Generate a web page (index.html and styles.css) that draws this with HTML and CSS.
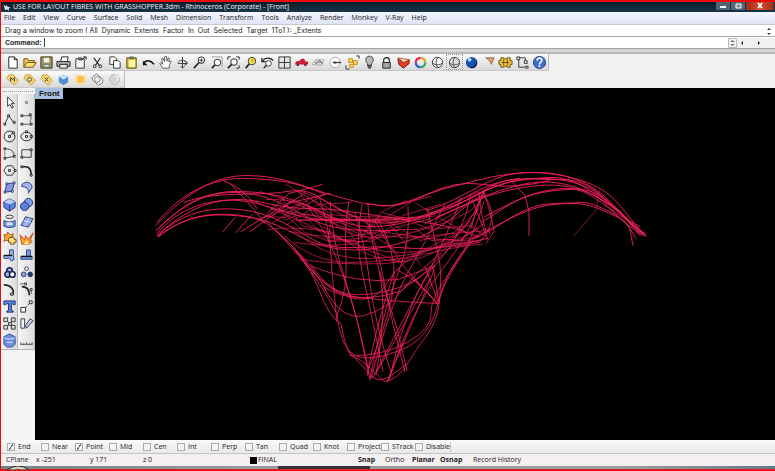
FILE: index.html
```html
<!DOCTYPE html>
<html lang="en">
<head>
<meta charset="utf-8">
<title>Rhinoceros (Corporate) - [Front]</title>
<link rel="stylesheet" href="styles.css">
</head>
<body>
<header class="title-bar">
  <svg class="app-icon" viewBox="0 0 10 10"><path d="M1 1l2 3 2-2 0 2 4 1-2 1 0 3-2-2-2 1-1-3z" fill="#dde3e8"/></svg>
  <h1>USE FOR LAYOUT FIBRES WITH GRASSHOPPER.3dm - Rhinoceros (Corporate) - [Front]</h1>
  <div class="window-buttons">
    <button aria-label="Minimize"><svg viewBox="0 0 10 8"><path d="M2 4h6v2H2z" fill="#fff"/></svg></button>
    <button aria-label="Restore"><svg viewBox="0 0 10 8"><path d="M3 2h5v4H3z" fill="#789" stroke="#fff"/></svg></button>
    <button class="close" aria-label="Close"><svg viewBox="0 0 10 8"><path d="M3 1l4 5M7 1L3 6" stroke="#fff" stroke-width="1.6"/></svg></button>
  </div>
</header>
<nav class="menu">
  <a href="#">File</a><a href="#">Edit</a><a href="#">View</a><a href="#">Curve</a><a href="#">Surface</a><a href="#">Solid</a><a href="#">Mesh</a><a href="#">Dimension</a><a href="#">Transform</a><a href="#">Tools</a><a href="#">Analyze</a><a href="#">Render</a><a href="#">Monkey</a><a href="#">V-Ray</a><a href="#">Help</a>
</nav>
<section class="history"><p>Drag a window to zoom ( All&nbsp; Dynamic&nbsp; Extents&nbsp; Factor&nbsp; In&nbsp; Out&nbsp; Selected&nbsp; Target&nbsp; 1To1 ): _Extents</p>
  <svg class="spin" viewBox="0 0 6 10"><path d="M1 4l2-2 2 2zM1 7l2 2 2-2z" fill="#333"/></svg>
</section>
<section class="command">
  <label for="cmd">Command:</label><input id="cmd" type="text">
  <button aria-label="History"><svg viewBox="0 0 9 10"><path d="M.5.5h8v9h-8z" fill="#f4f4f4" stroke="#bbb"/><path d="M2 4l2.500-2L7 4zM2 6l2.500 2L7 6z" fill="#777"/></svg></button>
  <div class="scroller"><svg viewBox="0 0 28 10"><path d="M6 3v4L4 5zM21 3v4l2-2z" fill="#222"/></svg></div>
</section>
<div class="divider"></div>
<div class="tool-row">
<div class="toolbar main-tools">
<button aria-label="New"><svg viewBox="0 0 16 16"><path d="M4 2h6l3 3v9H4zM10 2v3h3" fill="#fff" stroke="#222"/></svg></button>
<button aria-label="Open"><svg viewBox="0 0 16 16"><path d="M2 13V4h4l1 2h6v2" fill="#f5c84c" stroke="#6b5012"/><path d="M2 13l3-5h10l-3 5z" fill="#ffdf78" stroke="#6b5012"/></svg></button>
<button aria-label="Save"><svg viewBox="0 0 16 16"><path d="M2 2h12v12H2z" fill="#9c9559" stroke="#3a3820"/><path d="M5 3h6v5H5z" fill="#eee"/><path d="M5 10h6v3H5z" fill="#d9d9d0" stroke="#444" stroke-width=".6"/></svg></button>
<button aria-label="Print"><svg viewBox="0 0 16 16"><path d="M5 7l1-5h7l-1 5" fill="#fff" stroke="#222"/><path d="M1 7h14v5H1z" fill="#aaa" stroke="#222"/><path d="M4 10h8v4H4z" fill="#eee" stroke="#222"/></svg></button>
<button aria-label="Properties"><svg viewBox="0 0 16 16"><path d="M3 4h9v10H3z" fill="#f5f5f2" stroke="#333"/><path d="M6 3h3v2H6zM9 6l4-4M11 2h3v3" fill="#ccc" stroke="#222"/></svg></button>
<button aria-label="Cut"><svg viewBox="0 0 16 16"><path d="M4 3l6 8M11 3l-5 8" stroke="#222" stroke-width="1.200"/><g fill="none" stroke="#222"><circle cx="5" cy="12" r="1.500"/><circle cx="11" cy="12" r="1.500"/></g></svg></button>
<button aria-label="Copy"><svg viewBox="0 0 16 16"><path d="M3 2h5l2 2v6H3z" fill="#fff" stroke="#333"/><path d="M7 6h5l2 2v6H7z" fill="#fff" stroke="#333"/></svg></button>
<button aria-label="Paste"><svg viewBox="0 0 16 16"><path d="M3 3h10v11H3z" fill="#d7be34" stroke="#554a10"/><path d="M5 5h7v8H5z" fill="#fff799"/><path d="M6 2h4v2H6z" fill="#999" stroke="#333" stroke-width=".6"/></svg></button>
<button aria-label="Undo"><svg viewBox="0 0 16 16"><path d="M3 9c2-4 7-4 11 1" fill="none" stroke="#111" stroke-width="1.700"/><path d="M2 6v5h5z" fill="#111"/></svg></button>
<button aria-label="Pan"><svg viewBox="0 0 16 16"><path d="M5 14L2 9l1-1 2 2-1-6 1-1 2 4V2l2-.5.5 5L11 3l1 .5-.5 4L13 6l1 1-2 4v3z" fill="#fff" stroke="#333" stroke-width=".8"/></svg></button>
<button aria-label="Rotate view"><svg viewBox="0 0 16 16"><path d="M8 2v12M3 9h10M10 6l3 3-3 2" fill="none" stroke="#333"/><path d="M3 8c1-3 8-3 10 0M6 12l2 2 2-2" fill="none" stroke="#444"/></svg></button>
<button aria-label="Zoom dynamic"><svg viewBox="0 0 16 16"><circle cx="10" cy="5.500" r="3.500" fill="#eef" stroke="#222"/><path d="M7.500 8L2 14" stroke="#222" stroke-width="1.800"/><path d="M8 5.500h4M10 4v4" stroke="#333"/></svg></button>
<button aria-label="Zoom window"><svg viewBox="0 0 16 16"><path d="M3 2h11v10" fill="none" stroke="#555" stroke-dasharray="1 1"/><circle cx="9" cy="8" r="3.500" fill="#fff" stroke="#222"/><path d="M6.500 10.500L3 14" stroke="#222" stroke-width="1.700"/></svg></button>
<button aria-label="Zoom extents"><svg viewBox="0 0 16 16"><path d="M2 5V2h3M11 2h3v3M14 11v3h-3" fill="none" stroke="#222"/><circle cx="8.500" cy="7.500" r="3.500" fill="#fff" stroke="#222"/><path d="M6 10l-4 4" stroke="#222" stroke-width="1.700"/></svg></button>
<button aria-label="Zoom selected"><svg viewBox="0 0 16 16"><circle cx="9.500" cy="6.500" r="4" fill="#f4e65a" stroke="#333"/><path d="M6.500 9.500L3 14" stroke="#222" stroke-width="1.800"/><circle cx="10" cy="6" r="1.500" fill="#c9ac28"/></svg></button>
<button aria-label="Undo view"><svg viewBox="0 0 16 16"><path d="M2 3v4h4M3 6c3-4 9-3 11 0" fill="none" stroke="#222" stroke-width="1.300"/><circle cx="9" cy="9" r="3" fill="#fff" stroke="#333"/><path d="M7 11l-3 3" stroke="#222" stroke-width="1.500"/></svg></button>
<button aria-label="Four views"><svg viewBox="0 0 16 16"><path d="M2 2h12v12H2zM8 2v12M2 8h12" fill="#e4e4e0" stroke="#333"/></svg></button>
<button aria-label="Car view"><svg viewBox="0 0 16 16"><path d="M1 10l1-3 4-1 2-2h3l1 3h3v3z" fill="#c51f36"/><circle cx="4" cy="10.500" r="1.500" fill="#733"/><circle cx="12" cy="10.500" r="1.500" fill="#733"/></svg></button>
<button aria-label="Set CPlane"><svg viewBox="0 0 16 16"><path d="M1 10l4-5h9l-3 6zM3 8h10M6 5l-2 6M10 5l-2 6" fill="none" stroke="#aaa" stroke-width=".8"/><path d="M5 10l3-4 3 1 1 3" fill="none" stroke="#555"/></svg></button>
<button aria-label="Object snap"><svg viewBox="0 0 16 16"><circle cx="7.500" cy="8" r="5.500" fill="#fff" stroke="#aaa"/><path d="M5 8h9" stroke="#444" stroke-width="1.500"/><circle cx="7.500" cy="8" r="1.200" fill="#333"/></svg></button>
<button aria-label="Select points"><svg viewBox="0 0 16 16"><path d="M4 4h4v4H4zM9 6h4v4H9z" fill="#ffdc55" stroke="#c68a20"/><path d="M5 10h4v3H5z" fill="#ffdc55" stroke="#c68a20"/><path d="M12 1h3v3M1 11v4h4" fill="none" stroke="#333"/></svg></button>
<button aria-label="Lights"><svg viewBox="0 0 16 16"><path d="M6 11c0-3-2-3-2-6 0-5 8-5 8 0 0 3-2 3-2 6z" fill="#bbb" stroke="#444"/><path d="M6 11h4l-1 3H7z" fill="#777" stroke="#333"/></svg></button>
<button aria-label="Lock"><svg viewBox="0 0 16 16"><path d="M5 8V5c0-3 6-3 6 0v3" fill="none" stroke="#222" stroke-width="1.200"/><path d="M4 8h8v6H4z" fill="#a5a5a0" stroke="#222"/></svg></button>
<button aria-label="Layers"><svg viewBox="0 0 16 16"><path d="M2 4l6 4 6-3v4l-6 5-5-4z" fill="#e93d1f" stroke="#6b1720"/><path d="M2 3l7 1 5 1-6 3z" fill="#f7cfae" stroke="#a83a20" stroke-width=".7"/></svg></button>
<button aria-label="Colour"><svg viewBox="0 0 16 16"><g fill="none" stroke-width="2.500"><path d="M8 3a5 5 0 0 1 5 5" stroke="#f0a020"/><path d="M13 8a5 5 0 0 1-5 5" stroke="#35a965"/><path d="M8 13a5 5 0 0 1-5-5" stroke="#325eca"/><path d="M3 8a5 5 0 0 1 5-5" stroke="#e0284b"/></g></svg></button>
<button aria-label="Wireframe"><svg viewBox="0 0 16 16"><circle cx="8" cy="8" r="5.500" fill="#f9f9f9" stroke="#333"/><path d="M3 9c3 2 7 2 10 0M8 3c-2 3-2 7 0 10" fill="none" stroke="#444"/></svg></button>
<button class="pressed" aria-label="Ghosted"><svg viewBox="0 0 16 16"><circle cx="8" cy="8" r="5.500" fill="#ddd" stroke="#333"/><path d="M3 9c3 2 7 2 10 0M8 3c-2 3-2 7 0 10" fill="none" stroke="#555"/></svg></button>
<button aria-label="Render"><svg viewBox="0 0 16 16"><circle cx="8" cy="8" r="6" fill="#174fae"/><path d="M4 12c6 3 11-2 9-8 3 5 0 11-5 10z" fill="#071b4d"/><circle cx="6" cy="5" r="2" fill="#b8dcff"/></svg></button>
<button aria-label="Notes"><svg viewBox="0 0 16 16"><path d="M5 3h9l-3 7-2-4z" fill="#d9a77a" stroke="#805538" stroke-width=".8"/></svg></button>
<button aria-label="Options"><svg viewBox="0 0 16 16"><path d="M3 3h3v1h4V3h3v3h2v4h-2v3h-3v-1H6v1H3v-3H1V6h2z" fill="#eac642" stroke="#69530f"/><path d="M6 5v6M10 5v6M4 8h8" stroke="#69530f"/></svg></button>
<button aria-label="Dimensions"><svg viewBox="0 0 16 16"><path d="M2 2h3v3H2zM4 5v8h6M5 3h6v3M10 6h3v3h-3zM11 12h3v2h-3z" fill="none" stroke="#333"/></svg></button>
<button aria-label="Help"><svg viewBox="0 0 16 16"><circle cx="8" cy="8" r="6.500" fill="#3f6fca" stroke="#173b83"/><path d="M5.500 6c0-4 5.500-3 5 0-.3 2-2.500 1.500-2.500 4M8 11v2" fill="none" stroke="#fff" stroke-width="1.700"/></svg></button>
</div></div>
<div class="tool-row">
<div class="toolbar">
<button aria-label="Tag M"><svg viewBox="0 0 16 16"><path d="M2 7l2-4h5l5 6-4 5z" fill="#f2d36c" stroke="#c9a84a"/><path d="M6 10V6l2 2 2-2v4" fill="none" stroke="#433"/></svg></button>
<button aria-label="Tag O"><svg viewBox="0 0 16 16"><path d="M2 7l2-4h5l5 6-4 5z" fill="#f2d36c" stroke="#c9a84a"/><circle cx="8" cy="8" r="2" fill="#fff6aa" stroke="#433"/></svg></button>
<button aria-label="Tag R"><svg viewBox="0 0 16 16"><path d="M2 7l2-4h5l5 6-4 5z" fill="#f2d36c" stroke="#c9a84a"/><path d="M6 6l4 4M10 6l-4 4" stroke="#433"/></svg></button>
<button aria-label="Cube"><svg viewBox="0 0 16 16"><path d="M3 5l5-2 5 2v6l-5 3-5-3z" fill="#4f8fd2"/><path d="M3 5l5-2 5 2-5 3z" fill="#bfe3ff"/></svg></button>
<button aria-label="Sun"><svg viewBox="0 0 16 16"><path d="M8 2l2 2 3-1v3l2 2-2 2v3l-3-1-2 2-2-2H3v-3L1 8l2-2V3h3z" fill="#ffdf9a"/><circle cx="8" cy="8" r="4" fill="#ffc04c"/></svg></button>
<button aria-label="Link"><svg viewBox="0 0 16 16"><path d="M2 6l5-4 7 6-1 4-4 2-6-5z" fill="#eee" stroke="#777"/><circle cx="8" cy="8" r="3" fill="none" stroke="#888"/></svg></button>
<button aria-label="Disc"><svg viewBox="0 0 16 16"><circle cx="8" cy="8" r="5.500" fill="#d4d4d4" stroke="#bbb"/><path d="M8 4c4 0 5 3 2 5" fill="none" stroke="#eee" stroke-width="2"/></svg></button>
</div></div>
<main class="workspace">
<aside class="side">
<div class="grip"></div>
<div class="palette">
<button aria-label="Select"><svg viewBox="0 0 16 16"><path d="M6 2v10l2.500-2 2 4 1.500-1-2-4h3z" fill="#fff" stroke="#333"/></svg></button>
<button aria-label="Point"><svg viewBox="0 0 16 16"><circle cx="8" cy="8" r="1.200" fill="#fff" stroke="#444"/></svg></button>
<button aria-label="Polyline"><svg viewBox="0 0 16 16"><path d="M3 13l4-9 6 8" fill="none" stroke="#333"/><path d="M2 12h2v2H2zM6 3h2v2H6zM12 10h2v2h-2z" fill="#fff" stroke="#222"/></svg></button>
<button aria-label="Curve"><svg viewBox="0 0 16 16"><path d="M3 4h9c3 4-2 4 1 9H3" fill="none" stroke="#555"/><path d="M2 3h2v2H2zM11 2h2v2h-2zM2 12h2v2H2zM12 12h2v2h-2z" fill="#fff" stroke="#222"/></svg></button>
<button aria-label="Circle"><svg viewBox="0 0 16 16"><circle cx="8" cy="8" r="5.800" fill="none" stroke="#222"/><path d="M8 8l4-4" stroke="#444"/><path d="M7 7h2v2H7zM11 3h2v2h-2z" fill="#fff" stroke="#222"/></svg></button>
<button aria-label="Ellipse"><svg viewBox="0 0 16 16"><ellipse cx="8" cy="8" rx="6" ry="4.500" fill="none" stroke="#222"/><path d="M7 7h2v2H7zM7 2h2v2H7zM12 7h2v2h-2z" fill="#fff" stroke="#222"/></svg></button>
<button aria-label="Arc"><svg viewBox="0 0 16 16"><path d="M3 3c7 0 10 3 10 8M3 13l10-2" fill="none" stroke="#444"/><path d="M3 5v6" stroke="#777"/><path d="M2 2h2v2H2zM2 12h2v2H2zM12 10h2v2h-2z" fill="#fff" stroke="#222"/></svg></button>
<button aria-label="Rectangle"><svg viewBox="0 0 16 16"><path d="M3 4h10v8H3z" fill="none" stroke="#333"/><path d="M2 11h2v2H2zM12 3h2v2h-2z" fill="#fff" stroke="#222"/></svg></button>
<button aria-label="Polygon"><svg viewBox="0 0 16 16"><path d="M5 3h6l3 5-3 5H5L2 8z" fill="none" stroke="#333"/><path d="M7 7h2v2H7zM13 7h2v2h-2z" fill="#fff" stroke="#222"/></svg></button>
<button aria-label="Fillet"><svg viewBox="0 0 16 16"><path d="M3 4h4c5 0 6 5 6 9" fill="none" stroke="#222" stroke-width="1.800"/><path d="M2 3h2v2H2zM12 12h2v2h-2z" fill="#fff" stroke="#222"/></svg></button>
<button aria-label="Surface"><svg viewBox="0 0 16 16"><path d="M5 4l8-1-2 9-8 1z" fill="#8399e3" stroke="#253675"/><path d="M4 3h2v2H4zM12 2h2v2h-2zM2 12h2v2H2zM10 11h2v2h-2z" fill="#dce4ff" stroke="#253675" stroke-width=".8"/></svg></button>
<button aria-label="Loft"><svg viewBox="0 0 16 16"><path d="M3 5c5-5 11-2 11 3l-4 6C11 10 8 7 3 7z" fill="#a3b6ef" stroke="#293b82"/></svg></button>
<button aria-label="Box"><svg viewBox="0 0 16 16"><path d="M2 5l6-3 6 3v6l-6 4-6-4z" fill="#5c82df" stroke="#1f367a"/><path d="M2 5l6 3 6-3-6-3z" fill="#bccbff"/><path d="M8 8v7" stroke="#263f8c"/></svg></button>
<button aria-label="Boolean"><svg viewBox="0 0 16 16"><circle cx="10" cy="6" r="4.500" fill="#7e9bea" stroke="#1d337a"/><circle cx="6" cy="10" r="4.500" fill="#5c80d8" stroke="#1d337a"/></svg></button>
<button aria-label="Project"><svg viewBox="0 0 16 16"><ellipse cx="8" cy="3" rx="4" ry="1.800" fill="#eee" stroke="#333"/><path d="M2 7c4 2 8 2 12 0v6c-4 2-8 2-12 0z" fill="#7795dd" stroke="#27458f"/><path d="M5 9h6v3H5z" fill="#dde6ff"/></svg></button>
<button aria-label="Plane"><svg viewBox="0 0 16 16"><path d="M7 3l8 2-5 9-8-2z" fill="#8ea4ec" stroke="#334783"/><path d="M5 7l7 2M11 4L6 13" stroke="#d5dfff"/></svg></button>
<button aria-label="Group"><svg viewBox="0 0 16 16"><path d="M2 4l3 0 1-3 3 3 3-1-1 4-2 4-4-1-3 1 1-3z" fill="#f8a83c" stroke="#9b5b15"/><path d="M8 7h3v-1l2 1v2h2v3h-2v2h-4v-2H7V9z" fill="#ffe47c" stroke="#6c4817"/></svg></button>
<button aria-label="Explode"><svg viewBox="0 0 16 16"><path d="M3 14L1 4l5 5 1-4 3 4 5-7-3 8 2 1-3 3z" fill="#ff9e28" stroke="#c24d15"/><path d="M5 14l3-4 3 4" fill="#fff2a0"/></svg></button>
<button aria-label="Trim"><svg viewBox="0 0 16 16"><path d="M8 2h4v6l1 4-3 2-2-3H2V8h6z" fill="#9db6ef" stroke="#24427e"/><path d="M2 8h9" stroke="#111" stroke-width="1.500"/></svg></button>
<button aria-label="Split"><svg viewBox="0 0 16 16"><path d="M8 2h4v7h2v3H2V9h6z" fill="#779be9" stroke="#24427e"/><path d="M2 9h12" stroke="#111" stroke-width="1.500"/></svg></button>
<button aria-label="Combine"><svg viewBox="0 0 16 16"><g fill="#a4b5dc" stroke="#152659" stroke-width="1.700"><circle cx="8" cy="6" r="3"/><circle cx="6" cy="10" r="3"/><circle cx="11" cy="10" r="3" fill="#fff"/></g></svg></button>
<button aria-label="Separate"><svg viewBox="0 0 16 16"><g fill="#fff" stroke="#26396b"><circle cx="8" cy="4" r="2"/><circle cx="5" cy="10" r="2.500" fill="#8ea4dc"/><circle cx="12" cy="10" r="2.500" fill="#26396b"/></g></svg></button>
<button aria-label="Edit curve"><svg viewBox="0 0 16 16"><path d="M2 3c8 0 12 6 9 11" fill="none" stroke="#222" stroke-width="1.800"/><path d="M9 12h3v2H9z" fill="#fff" stroke="#222"/></svg></button>
<button aria-label="Control points"><svg viewBox="0 0 16 16"><path d="M3 5c6 0 8 3 8 9" fill="none" stroke="#222" stroke-width="1.800"/><path d="M1 2h6M13 7v6" stroke="#555"/><path d="M6 1h2v2H6zM12 7h2v2h-2z" fill="#fff" stroke="#333"/></svg></button>
<button aria-label="Text object"><svg viewBox="0 0 16 16"><path d="M2 2h12v4h-2l-1-1H10v7l2 1v1H5v-1l2-1V5H5L4 6H2z" fill="#5c82df" stroke="#1d356e"/></svg></button>
<button aria-label="Move"><svg viewBox="0 0 16 16"><path d="M5 11l7-7" stroke="#555" stroke-dasharray="2 1"/><path d="M2 9h5v5H2zM11 2h3v3h-3z" fill="#fff" stroke="#222"/></svg></button>
<button aria-label="Array"><svg viewBox="0 0 16 16"><path d="M5 5l7 7M12 4l-7 7" stroke="#777"/><path d="M2 2h4v4H2zM10 2h4v4h-4zM2 10h4v4H2zM10 10h4v4h-4zM7 7h3v3H7z" fill="#ddd" stroke="#333"/></svg></button>
<button aria-label="Rotate"><svg viewBox="0 0 16 16"><path d="M2 3h4v10H2z" fill="#f4f4f4" stroke="#334"/><path d="M8 13l-1-3 5-7 3 2z" fill="#c5cff2" stroke="#334"/></svg></button>
<button aria-label="Solid"><svg viewBox="0 0 16 16"><path d="M2 4l6-3 6 3v8l-3 3H5l-3-3z" fill="#6f90e0" stroke="#31508d"/><path d="M2 5c4 2 8 2 12 0M5 10h6" fill="none" stroke="#e3eaff"/></svg></button>
<button aria-label="Dimension"><svg viewBox="0 0 16 16"><path d="M2 12h12M2 10v3M5 11v2M8 10v3M11 11v2M14 10v3" stroke="#456" fill="none"/></svg></button>
</div>
</aside>
<section class="viewport">
<h2>Front</h2>
<svg class="model" viewBox="35 88 740 351">
<g class="wing">
<path d="M156 225C181 198 210 175 247 175S307 188 337 196S362 203 382 205S421 194 449 187S498 173 530 172S589 180 610 201S635 226 646 235"/>
<path d="M157 222C183 190 215 177 246 178S296 181 325 194"/>
<path d="M156 230C187 200 204 192 235 192S287 206 310 218S361 231 398 230"/>
<path d="M157 233C178 207 211 198 239 200S294 219 326 219S401 222 428 215S462 201 483 191S528 178 550 177S593 190 608 206S630 226 643 235"/>
<path d="M158 235C181 213 208 206 239 209S289 225 313 239S362 244 398 247S452 246 487 238"/>
<path d="M158 236C178 220 202 212 230 214S265 220 282 236S311 263 326 290"/>
<path d="M159 236C184 216 206 213 234 215S277 224 302 237S361 255 406 241S454 211 484 193"/>
<path d="M157 235C188 206 216 199 238 199S278 208 307 208S355 212 390 217S447 223 477 236"/>
<path d="M158 229C181 204 209 191 234 191S281 193 314 208S355 229 388 225S444 207 478 190S532 180 560 179S605 198 620 213S641 231 645 235"/>
<path d="M184 202C212 190 258 196 287 191S320 202 354 216S408 219 445 208S488 180 520 178"/>
<path d="M223 180Q244 187 257 208M252 214L236 232M235 217L223 231M267 213L289 193L322 184M241 231L269 214L305 193M250 231L291 202L330 193M231 184L248 202L262 219"/>
<path d="M367 203Q395 211 425 195T484 184T550 180"/>
<path d="M427 210C455 202 485 180 505 175S557 171 587 182S622 211 646 236"/>
<path d="M450 207C474 198 493 184 515 180S575 176 599 194S626 220 645 233"/>
<path d="M438 216C469 203 490 191 522 184S581 185 607 203S630 224 643 235"/>
<path d="M425 223C459 207 483 195 512 189S570 181 598 197S620 213 640 235"/>
<path d="M475 238C507 223 521 204 555 203S585 200 605 209S628 225 636 238"/>
<path d="M469 240C500 224 524 207 554 204S592 205 612 214S629 226 633 245"/>
<path d="M481 222C507 207 517 194 556 190S595 193 612 205S624 220 644 234"/>
<path d="M485 216C514 201 533 190 562 188S599 206 640 226"/>
<path d="M511 180L525 195L529 211L529 235"/>
<path class="faint" d="M600 189L596 210L574 235"/>
</g>
<g class="mesh">
<path d="M275 229Q306 255 318 287T341 323Q346 354 355 357T384 381Q398 379 407 364T428 333Q438 318 439 303T463 253T490 233"/>
<path d="M266 220Q304 258 321 286T337 315Q341 348 355 355T400 350Q430 338 438 303T470 243"/>
<path d="M294 248Q319 282 336 290T385 291T430 267T484 223"/>
<path d="M300 255Q325 290 350 297T388 281T433 248T484 192"/>
<path d="M311 264Q329 293 360 297T438 303"/>
<path d="M323 285Q341 321 364 315T401 291T431 261T470 220"/>
<path d="M350 355Q382 356 407 342T431 313T451 270T484 201"/>
<path d="M347 350Q361 363 371 375T405 364"/>
<path d="M307 205Q327 231 342 272T363 347L370 379"/>
<path d="M320 199Q331 231 332 272L337 321"/>
<path d="M330 201Q332 240 345 279T369 372"/>
<path d="M349 201Q344 225 346 257T337 315"/>
<path d="M355 212Q365 244 370 283T391 372"/>
<path d="M362 204Q355 240 362 271T383 371"/>
<path d="M365 217Q377 243 384 281T405 371"/>
<path d="M368 204Q369 235 379 269T397 328L407 370"/>
<path d="M378 219Q396 250 394 280T369 367"/>
<path d="M408 206Q411 241 397 276T370 378"/>
<path d="M427 208Q433 231 438 253T439 302"/>
<path d="M445 203Q427 239 409 270T371 378"/>
<path d="M461 198Q445 240 426 276T373 377"/>
<path d="M471 194Q463 235 436 264T389 380"/>
<path d="M484 190Q472 232 443 268T389 378"/>
<path d="M434 270L387 382M430 278L377 371M394 272Q376 325 367 375M374 219Q401 270 438 303"/>
<path d="M397 269Q421 282 437 303L410 273M433 266L439 303M425 266L438 301M379 271Q388 304 376 374"/>
<path d="M312 266Q356 284 398 279L435 265M325 287Q355 305 400 291L435 265"/>
<path d="M479 192Q481 215 486 231M484 192Q492 216 494 231L486 243M484 195Q502 218 479 242L455 246M480 196L471 228M473 201Q482 225 488 239"/>
</g>
<g class="weave">
<path d="M260 191Q294 201 337 221T425 236T480 231"/>
<path d="M266 199Q306 197 333 222T416 231T475 205"/>
<path d="M250 199Q295 218 332 235T403 252T479 228"/>
<path d="M271 208Q314 216 354 220T424 218L479 191"/>
<path d="M284 220Q306 209 321 218T353 216L405 217"/>
<path d="M300 219L365 219L433 216M296 220L350 220L406 219"/>
<path d="M289 231Q335 240 364 234T413 229T474 198"/>
<path d="M295 242Q327 247 354 243T403 215L440 204"/>
<path d="M272 223L310 198L331 214L354 216M275 205L305 232L330 241L355 240"/>
<path d="M258 219L302 203L343 222L360 247L400 261"/>
<path d="M268 229Q322 223 348 242T401 261L455 234"/>
<path d="M284 235Q313 262 350 262T427 253T482 244"/>
<path d="M301 259Q342 265 385 263T451 241L479 236"/>
<path d="M292 228Q325 260 370 258T448 244L481 240"/>
<path d="M299 190L324 200L355 216L381 231L427 238L478 241"/>
<path d="M364 231L382 211L406 200M371 226L414 200L431 196"/>
<path d="M382 212L404 218L430 229L470 225L486 236"/>
<path d="M385 219L420 240L454 232L479 209M415 202L435 215L468 233"/>
<path d="M323 226L345 241L371 241L396 227L431 218M332 214L328 240L360 238L380 215"/>
<path d="M307 218L325 236L353 241M281 196L302 225L331 232M324 194L286 217L264 216"/>
<path d="M341 216L391 246L405 262M388 223L398 233L421 265M415 228L431 240L453 239"/>
<path d="M298 191L320 217L370 238M286 184L319 203L350 218M286 225L318 204L351 202"/>
</g>
</svg>
</section>
</main>
<form class="snaps">
<label><input type="checkbox" checked>End</label><label><input type="checkbox">Near</label><label><input type="checkbox" checked>Point</label><label><input type="checkbox">Mid</label><label><input type="checkbox">Cen</label><label><input type="checkbox">Int</label><label><input type="checkbox">Perp</label><label><input type="checkbox">Tan</label><label><input type="checkbox">Quad</label><label><input type="checkbox">Knot</label><label><input type="checkbox">Project</label><label><input type="checkbox">STrack</label><label><input type="checkbox">Disable</label>
</form>
<footer class="status">
<span>CPlane</span><span>x -251</span><span>y 171</span><span>z 0</span><span class="layer"><i></i>FINAL</span>
<button class="on">Snap</button><button>Ortho</button><button class="on">Planar</button><button class="on">Osnap</button><button>Record History</button>
</footer>
<div class="taskbar"><svg viewBox="0 0 24 4"><path d="M1 4Q12-4 23 4z" fill="#cfd8d4" stroke="#222"/><path d="M8 4q4-3 8 0z" fill="#d5402a"/></svg><i></i></div>
</body>
</html>
```
FILE: styles.css
```css
* { box-sizing: border-box; }
body {
  margin: 0;
  height: 100vh;
  display: flex;
  flex-direction: column;
  overflow: hidden;
  border: solid #f00808;
  border-width: 2px 0 1px 1px;
  background: #f1f1f1;
  color: #222;
  font: 7px/10px "Open Sans", "Noto Sans", sans-serif;
}
h1, h2, p { margin: 0; font-size: inherit; }
button { border: 0; padding: 0; background: none; color: inherit; font: inherit; }
svg { display: block; }

.title-bar {
  flex: none;
  height: 10px;
  display: flex;
  align-items: center;
  padding-left: 1px;
  background: linear-gradient(#0b1a29, #16364a);
  color: #f4f6f8;
}
.title-bar h1 { font-weight: 500; margin-left: 1px; white-space: nowrap; }
.app-icon { width: 10px; height: 9px; }
.window-buttons { display: flex; width: 59px; height: 8px; margin-left: auto; align-self: flex-start; }
.window-buttons button { width: 15px; background: #526575; border-right: 1px solid #1b2c3a; }
.window-buttons .close { flex: 1; background: linear-gradient(90deg, #9c2b19, #d25234, #9c2b19); }
.window-buttons svg { width: 10px; height: 8px; margin: auto; }

.menu {
  flex: none;
  height: 13px;
  display: flex;
  align-items: center;
  gap: 8px;
  padding-left: 3px;
  background: linear-gradient(#f4f6fd, #dfe3f5);
  border-bottom: 1px solid #c6c9d4;
}
.menu a { color: #222; text-decoration: none; }

.history, .command {
  flex: none;
  height: 12px;
  display: flex;
  align-items: center;
  padding-left: 4px;
  background: #fff;
  border-bottom: 1px solid #a4a4a4;
  font-family: "Liberation Sans", Arial, sans-serif;
}
.history { white-space: nowrap; font-family: Inter, "Liberation Sans", sans-serif; }
.spin { width: 6px; height: 10px; margin: 0 3px 0 auto; }
.command label { font-weight: bold; }
.command input { flex: 1; min-width: 0; height: 9px; margin-left: 2px; padding: 0; border: 0; border-left: 1px solid #444; outline: 0; font: inherit; }
.command button svg { width: 9px; height: 10px; }
.scroller { width: 38px; background: #f1f1f1; }
.scroller svg { width: 28px; height: 10px; }
.divider { flex: none; height: 5px; background: #d6d6d6; border-bottom: 2px solid #b9b9b9; }

.tool-row { flex: none; display: flex; height: 17px; background: #f1f1f1; }
.toolbar {
  display: flex;
  padding: 0 1px 0 3px;
  background: linear-gradient(#fafafa, #d9d9d9);
  border-right: 1px solid #bbb;
  border-bottom: 1px solid #c9c9c9;
}
.toolbar button { width: 17px; height: 16px; }
.main-tools button:last-child { width: 16px; }
.toolbar svg { width: 15px; height: 15px; margin: auto; }
.pressed { outline: 1px dotted #999; outline-offset: -1px; }

.workspace { flex: 1; min-height: 0; display: flex; }
.side { flex: none; width: 34px; background: #f3f4f6; overflow: hidden; }
.grip { height: 3px; margin: 3px 2px 0; border-top: 1px dotted #999; }
.palette { display: grid; grid-template-columns: 17px 17px; grid-auto-rows: 17px; border-bottom: 1px solid #b5b5b5; }
.palette button { background: linear-gradient(90deg, #f6f6f6, #dcdcdc); border-right: 1px solid #b8b8b8; }
.palette svg { width: 15px; height: 15px; margin: auto; }
.viewport { position: relative; flex: 1; min-width: 0; background: #000; }
.viewport h2 { position: absolute; top: 0; left: 0; padding: 0 4px; background: #a9bfdf; color: #111; font: bold 8px/11px "Liberation Sans", Arial, sans-serif; }
.model { width: 100%; height: 100%; }
.model path { fill: none; stroke: #f5205a; stroke-linecap: round; }
.wing path { stroke-width: 0.9; }
.wing .faint { opacity: 0.6; }
.mesh path { stroke-width: 0.9; opacity: 0.9; }
.weave path { stroke-width: 0.8; opacity: 0.8; }

.snaps {
  flex: none;
  height: 14px;
  display: grid;
  grid-template-columns: repeat(13, 34px);
  align-items: center;
  padding-left: 6px;
  background: linear-gradient(#fafafa, #e9e9e9);
  border-bottom: 1px solid #c4c4c4;
}
.snaps label { display: flex; align-items: center; gap: 3px; white-space: nowrap; }
.snaps label:last-child { border-right: 1px solid #c8c8c8; margin-right: -2px; }
.snaps input { flex: none; appearance: none; width: 8px; height: 8px; margin: 0; border: 1px solid #aaa; background: #f4f4f4; }
.snaps input:checked { background: linear-gradient(120deg, #f4f4f4 42%, #56688c 42% 58%, #f4f4f4 58%); }

.status {
  flex: none;
  height: 12px;
  display: grid;
  grid-template-columns: 30px 54px 53px 107px 108px 27px 27px 28px 33px 1fr;
  align-items: center;
  justify-items: start;
  padding-left: 5px;
  background: #f4eff0;
  white-space: nowrap;
}
.layer { display: flex; align-items: center; gap: 1px; }
.layer i { width: 7px; height: 7px; background: #000; }
.on { font-weight: bold; }
.taskbar { flex: none; height: 4px; display: flex; background: linear-gradient(90deg, #73827c, #999 30%, #a0a09a 80%, #6b7780); border-bottom: 1px solid #dc2038; }
.taskbar svg { width: 24px; height: 4px; margin-left: 5px; }
.taskbar i { width: 92px; margin-left: 248px; background: #3a3336; }
```
